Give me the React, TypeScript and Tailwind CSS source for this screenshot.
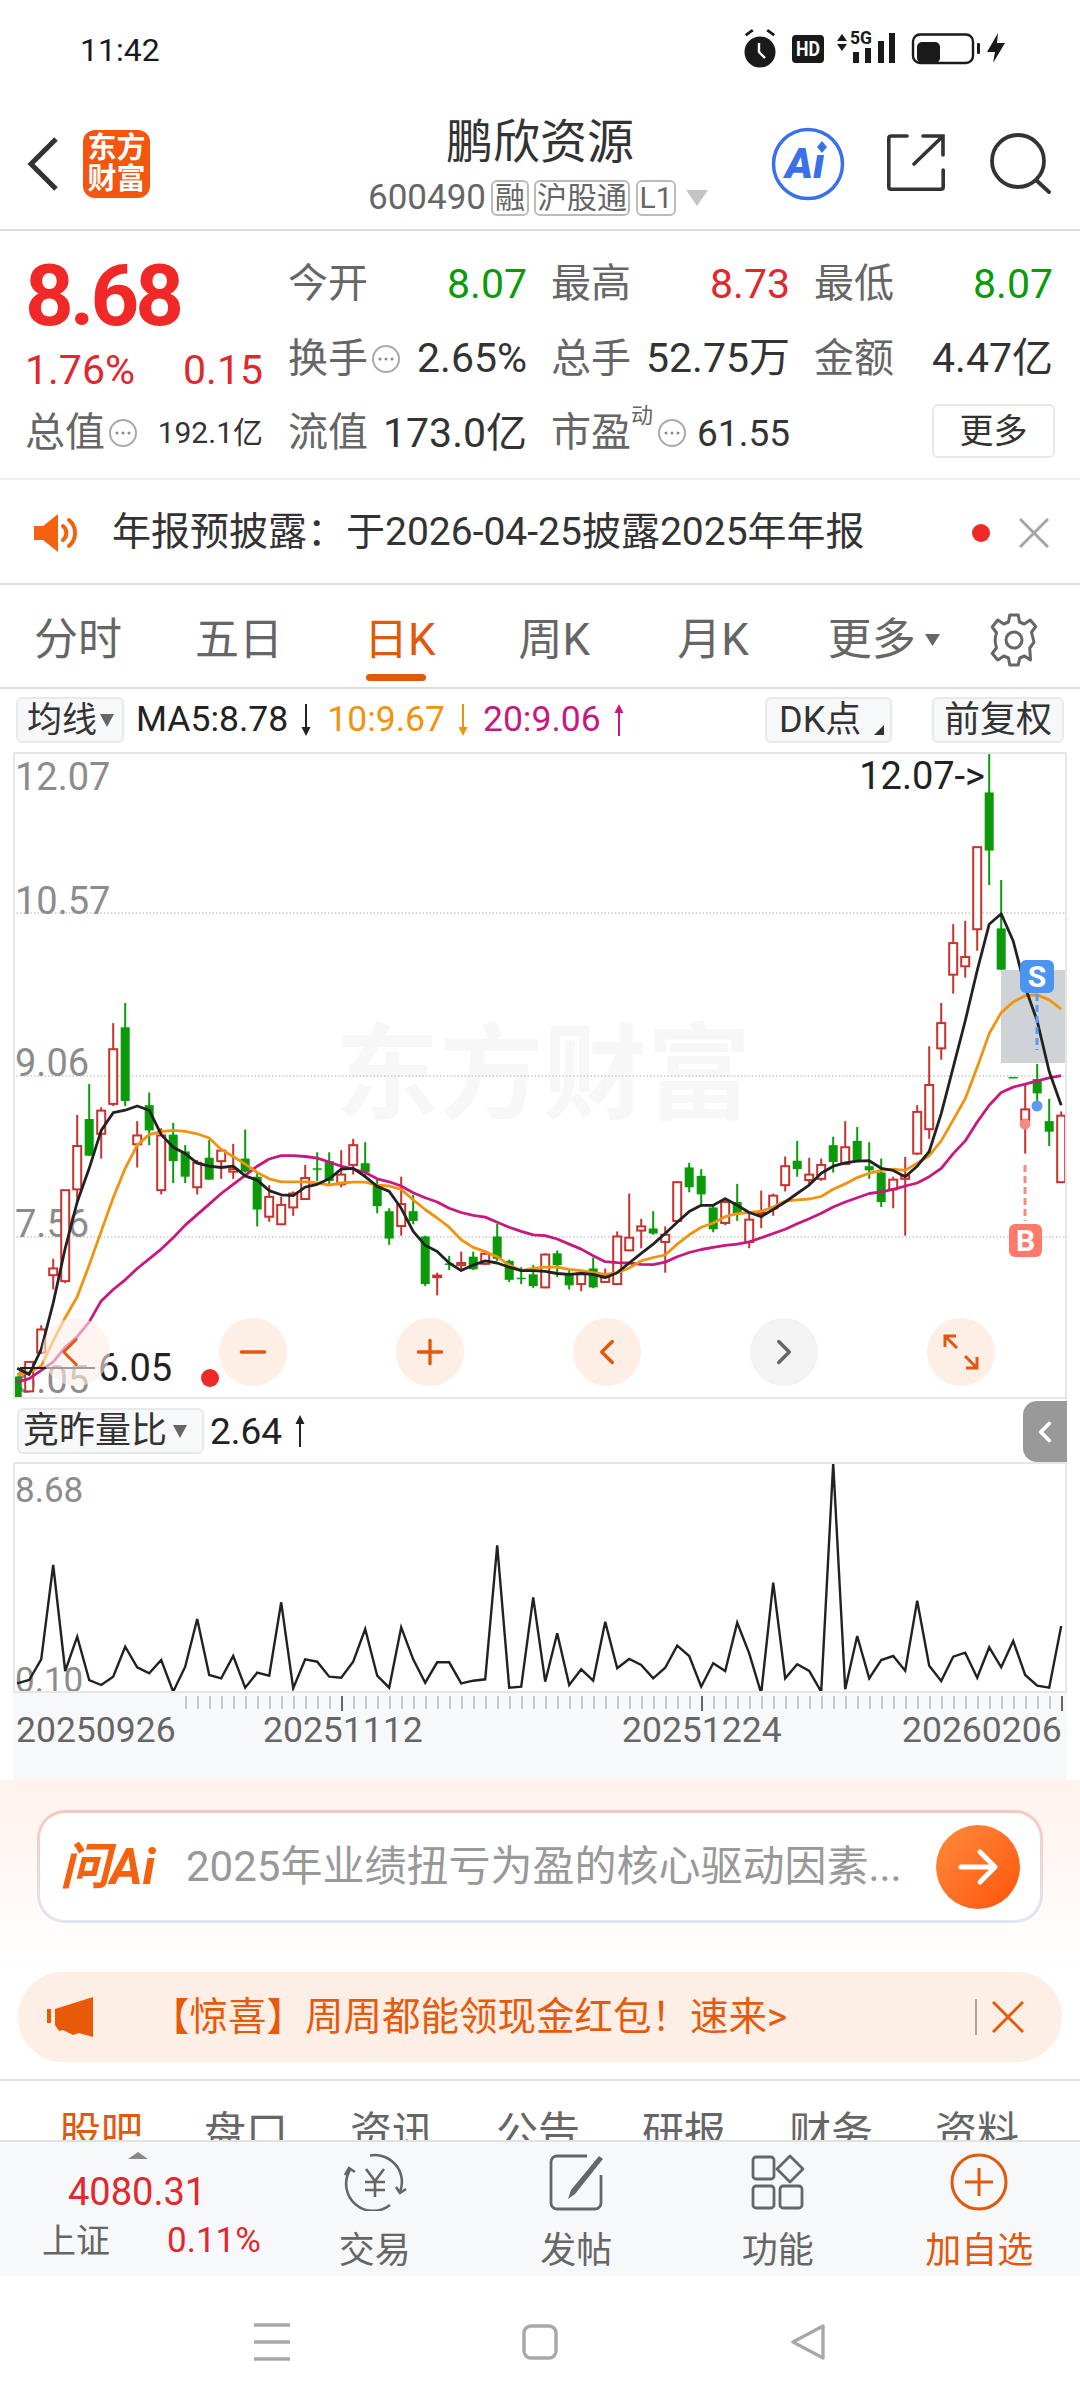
import type { ReactNode } from 'react';
import { ChevronLeft, ChevronRight, Minus, Plus } from 'lucide-react';

// candles: wick top, body top, body bottom, wick bottom, 1 = green (measured on the chart crops)
const CANDLES: number[][] = [
  [1515, 1515, 1568, 1568, 1], [1480, 1480, 1550, 1550, 0], [1393, 1403, 1458, 1460, 0], [1235, 1258, 1274, 1308, 0],
  [1072, 1072, 1288, 1293, 0], [893, 967, 1070, 1105, 0], [820, 903, 990, 990, 1], [875, 883, 938, 997, 0],
  [675, 737, 867, 872, 0], [627, 685, 860, 872, 1], [908, 942, 963, 1018, 0], [840, 870, 930, 965, 1],
  [925, 942, 1072, 1082, 0], [912, 940, 1003, 1055, 1], [965, 980, 1040, 1055, 1], [1000, 1007, 1065, 1082, 0],
  [953, 995, 1047, 1047, 1], [975, 978, 1003, 1045, 0], [962, 1022, 1028, 1045, 0], [928, 997, 1028, 1030, 1],
  [1030, 1040, 1118, 1158, 1], [1060, 1088, 1135, 1147, 0], [1087, 1107, 1153, 1155, 0], [1075, 1080, 1113, 1133, 0],
  [1012, 1043, 1093, 1095, 0], [982, 1020, 1022, 1050, 1], [982, 1003, 1050, 1060, 1], [977, 1035, 1058, 1065, 0],
  [950, 965, 1012, 1035, 0], [958, 1008, 1030, 1042, 1], [1045, 1060, 1110, 1127, 1], [1115, 1122, 1187, 1202, 1],
  [1040, 1105, 1157, 1180, 0], [1083, 1122, 1145, 1153, 1], [1180, 1182, 1295, 1300, 1], [1268, 1275, 1278, 1322, 0],
  [1228, 1246, 1248, 1262, 1], [1218, 1245, 1250, 1262, 0], [1218, 1230, 1260, 1262, 1], [1215, 1223, 1247, 1250, 0],
  [1152, 1182, 1235, 1240, 1], [1237, 1240, 1285, 1290, 1], [1255, 1280, 1282, 1295, 1], [1250, 1272, 1300, 1304, 1],
  [1222, 1225, 1303, 1305, 0], [1215, 1222, 1250, 1278, 1], [1262, 1272, 1298, 1308, 1], [1262, 1270, 1295, 1312, 0],
  [1232, 1258, 1303, 1305, 1], [1258, 1275, 1290, 1292, 0], [1170, 1182, 1295, 1297, 0], [1080, 1185, 1215, 1217, 0],
  [1140, 1158, 1168, 1210, 0], [1122, 1163, 1175, 1178, 1], [1158, 1178, 1195, 1268, 0], [1052, 1053, 1145, 1147, 0],
  [1007, 1018, 1065, 1077, 1], [1022, 1038, 1082, 1112, 1], [1105, 1113, 1165, 1172, 1], [1090, 1100, 1150, 1155, 0],
  [1057, 1100, 1127, 1145, 1], [1125, 1142, 1195, 1210, 0], [1073, 1125, 1128, 1162, 0], [1080, 1085, 1115, 1133, 0],
  [992, 1015, 1060, 1075, 0], [955, 1002, 1022, 1040, 1], [995, 1035, 1048, 1060, 0], [997, 1012, 1045, 1050, 0],
  [945, 965, 1005, 1030, 1], [908, 970, 1010, 1012, 0], [922, 955, 1003, 1005, 1], [958, 1015, 1025, 1045, 1],
  [997, 1030, 1100, 1112, 1], [1040, 1047, 1070, 1115, 0], [993, 1037, 1045, 1180, 0], [870, 886, 985, 988, 0],
  [730, 822, 927, 950, 0], [627, 675, 735, 762, 0], [440, 485, 560, 605, 0], [432, 518, 540, 567, 0],
  [257, 257, 452, 503, 0], [30, 127, 265, 347, 1], [335, 450, 548, 548, 1], [803, 803, 805, 805, 1],
  [820, 880, 905, 985, 0], [772, 808, 842, 880, 1], [855, 908, 933, 967, 1], [885, 895, 1053, 1053, 0],
];

const MA5 = [1495, 1510, 1450, 1340, 1210, 1100, 1020, 930, 888, 882, 872, 882, 940, 970, 985, 1008, 1015, 1018, 1015, 1038, 1048, 1073, 1083, 1085, 1065, 1058, 1045, 1022, 1020, 1040, 1063, 1075, 1115, 1170, 1203, 1218, 1245, 1263, 1250, 1240, 1245, 1255, 1263, 1263, 1265, 1270, 1272, 1270, 1272, 1280, 1268, 1245, 1222, 1200, 1175, 1148, 1123, 1108, 1108, 1092, 1108, 1125, 1135, 1118, 1100, 1080, 1060, 1032, 1015, 1007, 1003, 1002, 1020, 1025, 1040, 1015, 980, 890, 780, 670, 550, 440, 415, 480, 590, 670, 790, 870];
const MA10 = [1510, 1505, 1490, 1430, 1375, 1325, 1250, 1170, 1090, 1020, 965, 940, 933, 930, 932, 938, 948, 975, 992, 1010, 1030, 1045, 1052, 1052, 1052, 1055, 1060, 1055, 1053, 1053, 1060, 1062, 1070, 1095, 1118, 1138, 1160, 1190, 1208, 1218, 1230, 1250, 1263, 1258, 1255, 1255, 1260, 1263, 1268, 1272, 1268, 1257, 1240, 1232, 1226, 1200, 1178, 1160, 1150, 1135, 1128, 1125, 1122, 1112, 1098, 1095, 1093, 1087, 1070, 1057, 1042, 1032, 1025, 1022, 1025, 1008, 990, 955, 905, 855, 780, 700, 650, 625, 610, 608, 620, 642];
const MA20 = [1528, 1520, 1500, 1480, 1445, 1420, 1385, 1335, 1308, 1285, 1258, 1235, 1212, 1185, 1155, 1130, 1105, 1080, 1058, 1037, 1015, 998, 990, 990, 992, 996, 1005, 1015, 1022, 1030, 1045, 1052, 1062, 1078, 1090, 1100, 1115, 1125, 1132, 1136, 1148, 1160, 1170, 1178, 1180, 1188, 1200, 1212, 1228, 1242, 1244, 1245, 1248, 1249, 1243, 1230, 1220, 1213, 1208, 1203, 1200, 1195, 1185, 1175, 1165, 1152, 1140, 1127, 1112, 1100, 1090, 1080, 1076, 1070, 1062, 1055, 1040, 1020, 985, 955, 910, 870, 840, 827, 820, 812, 805, 800];
const RATIO = [880, 870, 808, 525, 843, 740, 870, 885, 860, 770, 832, 850, 810, 905, 830, 687, 855, 865, 798, 893, 848, 857, 637, 895, 808, 815, 860, 863, 815, 717, 857, 893, 712, 808, 878, 817, 817, 880, 872, 868, 466, 893, 890, 622, 875, 730, 885, 838, 872, 695, 835, 807, 825, 865, 833, 767, 798, 890, 820, 843, 698, 790, 910, 578, 865, 823, 843, 905, 220, 898, 738, 865, 810, 798, 842, 632, 827, 873, 800, 788, 863, 772, 832, 753, 855, 887, 893, 708];

const candleX = (i: number) => 17.2 + 12 * i;
const priceY = (z: number) => 740 + z / 2.376;
const linePoints = (vals: number[]) => vals.map((v, i) => `${candleX(i).toFixed(1)},${priceY(v).toFixed(1)}`).join(' ');

function PriceChart() {
    return (
        <svg className="absolute inset-0 w-full h-full" viewBox="15 755 1050 643">
            {[914, 1077, 1238].map((y) => (
                <line key={y} x1="13" x2="1067" y1={y} y2={y} stroke="#c9c9c9" strokeWidth="1.5" strokeDasharray="1.5 2" />
            ))}
            <g fill="#8c8c8c" fontSize="38">
                <text x="15" y="791">12.07</text>
                <text x="15" y="915">10.57</text>
                <text x="15" y="1077">9.06</text>
                <text x="15" y="1238">7.56</text>
                <text x="15" y="1394">6.05</text>
            </g>
            <rect x="1001" y="971" width="66" height="93" fill="#cfd3d8" />
            {CANDLES.map(([wt, bt, bb, wb, green], i) => {
                const x = candleX(i);
                const color = green ? '#0a9a0a' : '#c8322e';
                return (
                    <g key={i}>
                        <line x1={x} x2={x} y1={priceY(wt)} y2={priceY(wb)} stroke={color} strokeWidth="2" />
                        {green ? (
                            <rect x={x - 4.5} y={priceY(bt)} width="9" height={Math.max(priceY(bb) - priceY(bt), 1.5)} fill={color} />
                        ) : (
                            <rect x={x - 4} y={priceY(bt)} width="8" height={Math.max(priceY(bb) - priceY(bt), 1.5)} fill="#fff" stroke={color} strokeWidth="2" />
                        )}
                    </g>
                );
            })}
            <polyline points={linePoints(MA20)} fill="none" stroke="#c8187e" strokeWidth="2.8" strokeLinejoin="round" />
            <polyline points={linePoints(MA10)} fill="none" stroke="#f0930f" strokeWidth="2.8" strokeLinejoin="round" />
            <polyline points={linePoints(MA5)} fill="none" stroke="#222" strokeWidth="2.8" strokeLinejoin="round" />
            <line x1="1037" x2="1037" y1="995" y2="1051" stroke="#5b9bf0" strokeWidth="3" strokeDasharray="7 4" />
            <line x1="1025" x2="1025" y1="1166" y2="1222" stroke="#f58a80" strokeWidth="3" strokeDasharray="7 4" />
            <ellipse cx="1037" cy="1107" rx="5.5" ry="5.5" fill="#5b9bf0" />
            <ellipse cx="1025" cy="1125" rx="5.5" ry="5.5" fill="#f58a80" />
            <rect x="1020" y="961" width="34" height="33" rx="6" fill="#4b95f0" />
            <text x="1037" y="988" fontSize="30" fontWeight="700" fill="#fff" textAnchor="middle">S</text>
            <rect x="1009" y="1225" width="33" height="33" rx="6" fill="#ff7a6a" />
            <text x="1025.5" y="1252" fontSize="30" fontWeight="700" fill="#fff" textAnchor="middle">B</text>
            <text x="985" y="790" fontSize="38" fill="#222" textAnchor="end">12.07-&gt;</text>
            <line x1="20" x2="95" y1="1369" y2="1369" stroke="#222" strokeWidth="2" />
            <text x="98" y="1382" fontSize="38" fill="#222">6.05</text>
            <circle cx="210" cy="1379" r="9" fill="#f02828" />
        </svg>
    );
}

function RatioChart() {
    const points = RATIO.map((v, i) => `${candleX(i).toFixed(1)},${(1390 + v / 3).toFixed(1)}`).join(' ');
    return (
        <svg className="absolute inset-0 w-full h-full" viewBox="15 1464 1050 227">
            <g fill="#8c8c8c" fontSize="35">
                <text x="15" y="1502">8.68</text>
                <text x="15" y="1692">0.10</text>
            </g>
            <polyline points={points} fill="none" stroke="#222" strokeWidth="2.4" strokeLinejoin="miter" />
        </svg>
    );
}

function AxisTicks() {
    const ticks = Array.from({ length: 74 }, (_, i) => 186 + i * 12);
    return (
        <svg className="block w-[1054px] h-[20px]" viewBox="13 1693 1054 20">
            {ticks.map((x) => {
                const major = x === 342 || x === 702 || x === 1062;
                return (
                    <line key={x} x1={x} x2={x} y1="1696" y2={major ? 1711 : 1709} stroke={major ? '#666' : '#aaa'} strokeWidth={major ? 2 : 1.2} />
                );
            })}
        </svg>
    );
}

function DotsIcon({ className }: { className?: string }) {
    return (
        <svg className={className} viewBox="0 0 30 30" fill="none">
            <circle cx="15" cy="15" r="13" stroke="#aaa" strokeWidth="2" />
            <circle cx="9" cy="15" r="1.5" fill="#888" />
            <circle cx="15" cy="15" r="1.5" fill="#888" />
            <circle cx="21" cy="15" r="1.5" fill="#888" />
        </svg>
    );
}

// thin trend arrow next to the MA values
function TrendArrow({ up, className }: { up?: boolean; className?: string }) {
    return (
        <svg className={`w-[12px] h-[32px] ${className}`} viewBox="0 0 12 32" fill="currentColor">
            {up ? <path d="M6 0l4.500 9H7v23H5V9H1.500z" /> : <path d="M6 32l4.500-9H7V0H5v23H1.500z" />}
        </svg>
    );
}

function StatusIcons() {
    return (
        <svg className="w-[290px] h-[60px]" viewBox="0 0 290 60">
            <g fill="#1a1a1a">
                <circle cx="30" cy="32" r="15.5" />
                <path d="M15 14l7-5 1.6 2.2-7 5zM45 14l-7-5-1.6 2.2 7 5z" />
                <rect x="62" y="15" width="32" height="28" rx="4" />
                <path d="M107 21l5-7 5 7zM107 24h10l-5 7z" />
                <rect x="123" y="32" width="6" height="11" />
                <rect x="135" y="28" width="6" height="15" />
                <rect x="148" y="21" width="6" height="22" />
                <rect x="159" y="13" width="6" height="30" />
                <rect x="187" y="22" width="23" height="21" rx="5" />
                <rect x="247" y="23" width="3" height="11" rx="1" />
                <path d="M268 13l-11 19h8l-2 11 12-20h-8z" />
            </g>
            <path d="M29 23v9l6 6" stroke="#fff" strokeWidth="2.4" fill="none" />
            <rect x="183" y="14.5" width="60" height="28.5" rx="7" fill="none" stroke="#1a1a1a" strokeWidth="2.4" />
            <text x="78" y="36" fontSize="20" fontWeight="700" fill="#fff" textAnchor="middle" textLength="24" lengthAdjust="spacingAndGlyphs">HD</text>
            <text x="131" y="24" fontSize="18" fontWeight="700" fill="#1a1a1a" textAnchor="middle" textLength="22" lengthAdjust="spacingAndGlyphs">5G</text>
        </svg>
    );
}

function Quote({ label, value, color = 'text-[#333]', extra }: { label: string; value: string; color?: string; extra?: ReactNode }) {
    return (
        <div className="w-[239px] flex items-center justify-between">
            <span className="text-[40px] leading-none text-[#666] flex items-center">{label}{extra}</span>
            <span className={`text-[41px] leading-none ${color}`}>{value}</span>
        </div>
    );
}

function BarItem({ label, active, children }: { label: string; active?: boolean; children: ReactNode }) {
    return (
        <div className="flex-1 flex flex-col items-center pt-[11px]">
            <div className="h-[58px] flex items-center justify-center">{children}</div>
            <span className={`mt-[20px] text-[36px] leading-[40px] ${active ? 'text-[#e0590f]' : 'text-[#666]'}`}>{label}</span>
        </div>
    );
}

export default function App() {
    return (
        <div className="w-[1080px] h-[2408px] overflow-hidden bg-white font-[Roboto,'Noto_Sans_CJK_SC',sans-serif]">
            {/* Status bar */}
            <div className="h-[100px] flex justify-between pl-[80px] pr-[60px] pt-[20px]">
                <span className="text-[32px] leading-[60px] text-[#1a1a1a]">11:42</span>
                <StatusIcons />
            </div>

            {/* Header */}
            <div className="h-[131px] flex border-b-2 border-[#dddddd]">
                <div className="w-[320px] flex pl-[27px] pt-[30px]">
                    <svg className="w-[32px] h-[56px] mt-[6px]" viewBox="0 0 32 56" fill="none">
                        <path d="M29 3L4 28l25 25" stroke="#333" strokeWidth="5" />
                    </svg>
                    <div className="ml-[24px] w-[67px] h-[68px] rounded-[12px] bg-[#f4550f] flex flex-col items-center justify-center text-white text-[29px] leading-[31px] font-bold">
                        <span>东方</span>
                        <span>财富</span>
                    </div>
                </div>
                <div className="w-[440px] flex flex-col items-center">
                    <div className="mt-[17px] text-[47px] leading-[50px] text-[#333]">鹏欣资源</div>
                    <div className="mt-[11px] -ml-[4px] flex items-center text-[#666]">
                        <span className="text-[35px] leading-[40px]">600490</span>
                        <span className="ml-[5px] w-[38px] h-[36px] border-2 border-[#bbbbbb] rounded-[6px] text-[30px] leading-[32px] text-center">融</span>
                        <span className="ml-[5px] w-[96px] h-[36px] border-2 border-[#bbbbbb] rounded-[6px] text-[30px] leading-[32px] text-center">沪股通</span>
                        <span className="ml-[6px] w-[40px] h-[36px] border-2 border-[#bbbbbb] rounded-[6px] text-[30px] leading-[32px] text-center">L1</span>
                        <svg className="ml-[10px] w-[22px] h-[16px]" viewBox="0 0 22 16"><path d="M0 0h22L11 16z" fill="#c4c4c4" /></svg>
                    </div>
                </div>
                <div className="flex-1 relative flex items-start pt-[27px] pl-[11px]">
                    <svg className="w-[74px] h-[74px]" viewBox="0 0 74 74" fill="none">
                        <circle cx="37" cy="37" r="34.5" stroke="#3a70e8" strokeWidth="3.5" />
                        <text x="34" y="51" fontSize="42" fontWeight="900" fontStyle="italic" fill="#3a70e8" textAnchor="middle">{'A\u0131'}</text>
                        <path d="M51 14l5 6-5 6-5-6z" fill="#3a70e8" />
                    </svg>
                    <svg className="ml-[42px] mt-[7px] w-[58px] h-[57px]" viewBox="0 0 58 57" fill="none" stroke="#333" strokeWidth="3.6" strokeLinecap="round">
                        <path d="M20 2H4a2.2 2.2 0 0 0-2.2 2.2V53a2.2 2.2 0 0 0 2.2 2.2H54a2.2 2.2 0 0 0 2.2-2.2V36" />
                        <path d="M27 30L55 3M36 2h20v19" />
                    </svg>
                    <svg className="ml-[44px] mt-[5px] w-[62px] h-[62px]" viewBox="0 0 62 62" fill="none" stroke="#333" strokeWidth="3.8" strokeLinecap="round">
                        <circle cx="29" cy="29" r="26" />
                        <path d="M47 48l13 12" />
                    </svg>
                </div>
            </div>

            {/* Quote */}
            <div className="h-[249px] flex border-b-2 border-[#eeeeee] pt-[16px]">
                <div className="w-[288px] pl-[25px] flex flex-col">
                    <div className="h-[98px] flex items-center text-[85px] leading-none font-bold text-[#f02828] tracking-[-4px]">8.68</div>
                    <div className="h-[51px] flex items-center justify-between pr-[25px] text-[41px] leading-none text-[#e0282e]">
                        <span>1.76%</span>
                        <span>0.15</span>
                    </div>
                    <div className="h-[74px] flex items-center justify-between pr-[25px]">
                        <span className="text-[40px] leading-none text-[#666] flex items-center">总值<DotsIcon className="ml-[3px] w-[30px] h-[30px]" /></span>
                        <span className="text-[30px] leading-none text-[#333]">192.1亿</span>
                    </div>
                </div>
                <div className="flex-1 flex flex-col">
                    <div className="h-[74px] flex items-center gap-[24px]">
                        <Quote label="今开" value="8.07" color="text-[#0a9a0a]" />
                        <Quote label="最高" value="8.73" color="text-[#e0282e]" />
                        <Quote label="最低" value="8.07" color="text-[#0a9a0a]" />
                    </div>
                    <div className="h-[75px] flex items-center gap-[24px]">
                        <Quote label="换手" value="2.65%" extra={<DotsIcon className="ml-[3px] w-[30px] h-[30px]" />} />
                        <Quote label="总手" value="52.75万" />
                        <Quote label="金额" value="4.47亿" />
                    </div>
                    <div className="h-[74px] flex items-center gap-[24px]">
                        <Quote label="流值" value="173.0亿" />
                        <div className="w-[239px] flex items-center justify-between">
                            <span className="text-[40px] leading-none text-[#666] flex items-center">
                                市盈
                                <span className="text-[22px] leading-none -mt-[34px] w-[26px]">动</span>
                                <DotsIcon className="w-[30px] h-[30px]" />
                            </span>
                            <span className="text-[37px] leading-none text-[#333]">61.55</span>
                        </div>
                        <div className="ml-[118px] w-[123px] h-[54px] -mt-[5px] border-2 border-[#e8e8e8] rounded-[6px] flex items-center justify-center text-[34px] leading-none text-[#333]">更多</div>
                    </div>
                </div>
            </div>

            {/* Notice */}
            <div className="h-[105px] flex items-center border-b-2 border-[#dddddd] pl-[34px] pt-[2px]">
                <svg className="w-[46px] h-[38px]" viewBox="0 0 46 38" fill="none">
                    <path d="M0 12h9L24 0v38L9 26H0z" fill="#f4620f" />
                    <path d="M29 12a9 9 0 0 1 0 14M35 6a17 17 0 0 1 0 26" stroke="#f4620f" strokeWidth="4" strokeLinecap="round" />
                </svg>
                <span className="ml-[32px] text-[39px] leading-none text-[#333] whitespace-nowrap">{'年报预披露\uFF1A于2026-04-25披露2025年年报'}</span>
                <span className="ml-auto w-[18px] h-[18px] rounded-full bg-[#f02828]" />
                <svg className="ml-[29px] mr-[31px] w-[30px] h-[30px]" viewBox="0 0 30 30" fill="none" stroke="#a6a6a6" strokeWidth="3">
                    <path d="M1 1l28 28M29 1L1 29" />
                </svg>
            </div>

            {/* Period tabs */}
            <div className="h-[104px] flex items-center border-b-2 border-[#dddddd] pt-[8px] pl-[34px] text-[44px] leading-none text-[#666]">
                <span>分时</span>
                <span className="ml-[73px]">五日</span>
                <span className="relative ml-[81px] text-[#e0590f]">
                    日K
                    <span className="absolute left-[2px] -bottom-[19px] w-[60px] h-[7px] rounded-full bg-[#e0590f]" />
                </span>
                <span className="ml-[83px]">周K</span>
                <span className="ml-[87px]">月K</span>
                <span className="ml-[79px]">更多</span>
                <svg className="ml-[9px] w-[15px] h-[12px]" viewBox="0 0 15 12"><path d="M0 0h15L7.5 12z" fill="#666" /></svg>
                <svg className="ml-[44px] w-[60px] h-[60px]" viewBox="0 0 24 24" fill="none" stroke="#666" strokeWidth="1.2" strokeLinejoin="round">
                    <path d="M10.3 2h3.4l.5 2.8 1.9.8 2.4-1.6 2.2 2.6-1.7 2.3.5 2 .5 2-1.7 2.3L18.600 20l-2.400-1.600-1.900.8L13.700 22h-3.400l-.5-2.800-1.900-.8L5.500 20l-2.200-2.600L5 15.100l-.5-2 0-2 .5-2-1.700-2.300L5.500 4l2.400 1.600 1.900-.8z" />
                    <circle cx="12" cy="12" r="3.200" />
                </svg>
            </div>

            {/* MA legend */}
            <div className="h-[63px] flex items-start pt-[8px] pl-[16px]">
                <div className="w-[108px] h-[46px] flex items-center pl-[9px] rounded-[6px] border-2 border-[#e8e9ec] bg-[#f7f8fa] text-[35px] leading-none text-[#333]">
                    均线
                    <svg className="ml-[3px] w-[14px] h-[14px]" viewBox="0 0 14 14"><path d="M0 1h14L7 14z" fill="#666" /></svg>
                </div>
                <div className="h-[46px] ml-[12px] flex items-center text-[35.5px] leading-none">
                    <span className="text-[#222]">MA5:8.78</span>
                    <TrendArrow className="ml-[12px] text-[#222]" />
                    <span className="ml-[15px] text-[#f0930f]">10:9.67</span>
                    <TrendArrow className="ml-[12px] text-[#f0930f]" />
                    <span className="ml-[14px] text-[#c8187e]">20:9.06</span>
                    <TrendArrow up className="ml-[12px] text-[#c8187e]" />
                </div>
                <div className="ml-auto flex">
                    <div className="w-[127px] h-[46px] flex items-center pl-[12px] rounded-[6px] border-2 border-[#e8e9ec] bg-[#f7f8fa] text-[36px] leading-none text-[#333] relative">
                        DK点
                        <span className="absolute right-[6px] bottom-[6px] w-0 h-0 border-l-[10px] border-l-transparent border-b-[10px] border-b-[#333]" />
                    </div>
                    <div className="ml-[40px] mr-[16px] w-[132px] h-[46px] flex items-center justify-center rounded-[6px] border-2 border-[#e8e9ec] bg-[#f7f8fa] text-[36px] leading-none text-[#333]">前复权</div>
                </div>
            </div>

            {/* Price chart */}
            <div className="relative mx-[13px] h-[647px] border-2 border-[#e6e6e6] overflow-hidden">
                <span className="absolute left-[320px] top-[270px] text-[104px] leading-none font-bold text-[#f7f7f7] whitespace-nowrap">东方财富</span>
                <PriceChart />
                <div className="absolute left-[27px] top-[564px] flex gap-[109px]">
                    <div className="w-[68px] h-[68px] rounded-full bg-[#fdeee6]/60 flex items-center justify-center">
                        <ChevronLeft className="w-[50px] h-[50px] -ml-[12px] text-[#e0590f]" strokeWidth={1.4} />
                    </div>
                    <div className="w-[68px] h-[68px] rounded-full bg-[#fdeee6] flex items-center justify-center">
                        <Minus className="w-[40px] h-[40px] text-[#e0590f]" strokeWidth={2} />
                    </div>
                    <div className="w-[68px] h-[68px] rounded-full bg-[#fdeee6] flex items-center justify-center">
                        <Plus className="w-[40px] h-[40px] text-[#e0590f]" strokeWidth={2} />
                    </div>
                    <div className="w-[68px] h-[68px] rounded-full bg-[#fdeee6] flex items-center justify-center">
                        <ChevronLeft className="w-[42px] h-[42px] text-[#e0590f]" strokeWidth={2} />
                    </div>
                    <div className="w-[68px] h-[68px] rounded-full bg-[#f3f3f3] flex items-center justify-center">
                        <ChevronRight className="w-[42px] h-[42px] text-[#666]" strokeWidth={2} />
                    </div>
                    <div className="w-[68px] h-[68px] rounded-full bg-[#fdeee6] flex items-center justify-center">
                        <svg className="w-[36px] h-[36px]" viewBox="0 0 36 36" fill="none" stroke="#e0590f" strokeWidth="3">
                            <path d="M2 13V2h11M2 2l12 12M34 23v11H23M34 34L22 22" />
                        </svg>
                    </div>
                </div>
            </div>

            {/* Sub indicator legend */}
            <div className="h-[63px] flex items-start pt-[9px] pl-[17px] relative">
                <div className="w-[187px] h-[46px] flex items-center pl-[4px] rounded-[6px] border-2 border-[#e8e9ec] bg-[#f7f8fa] text-[36px] leading-none text-[#333]">
                    竞昨量比
                    <svg className="ml-[6px] w-[14px] h-[14px]" viewBox="0 0 14 14"><path d="M0 1h14L7 14z" fill="#666" /></svg>
                </div>
                <span className="ml-[6px] h-[46px] flex items-center text-[37px] leading-none text-[#222]">2.64</span>
                <div className="h-[46px] flex items-center"><TrendArrow up className="ml-[12px] text-[#222]" /></div>
                <div className="absolute right-[13px] top-[2px] w-[44px] h-[61px] bg-[#999999] rounded-l-[14px] flex items-center justify-center">
                    <ChevronLeft className="w-[34px] h-[40px] text-white" strokeWidth={2.6} />
                </div>
            </div>

            {/* Ratio chart */}
            <div className="relative mx-[13px] h-[231px] border-2 border-[#e6e6e6] overflow-hidden">
                <RatioChart />
            </div>

            {/* Date axis */}
            <div className="mx-[13px] h-[87px] bg-[#f7f8fa]">
                <AxisTicks />
                <div className="flex text-[35.5px] leading-none text-[#666]">
                    <span className="ml-[3px] w-[160px] shrink-0">20250926</span>
                    <span className="ml-[87px] w-[160px] shrink-0">20251112</span>
                    <span className="ml-[199px] w-[160px] shrink-0">20251224</span>
                    <span className="ml-[120px] w-[160px] shrink-0">20260206</span>
                </div>
            </div>

            {/* Ask AI */}
            <div className="h-[192px] pt-[30px] px-[37px] bg-linear-to-b from-[#fff2ec] to-white">
                <div className="h-[113px] p-[3px] rounded-[28px] bg-linear-to-b from-[#f6c8bd] to-[#dfe6f3]">
                    <div className="h-full rounded-[25px] bg-white flex items-center pl-[20px] pr-[20px]">
                        <span className="w-[98px] text-[50px] leading-none font-bold italic text-[#f4620f] whitespace-nowrap">问Ai</span>
                        <span className="ml-[28px] text-[42px] leading-none text-[#999999] whitespace-nowrap">2025年业绩扭亏为盈的核心驱动因素...</span>
                        <div className="ml-auto w-[84px] h-[84px] rounded-full bg-linear-to-br from-[#ff8a3a] to-[#ff5200] flex items-center justify-center">
                            <svg className="w-[42px] h-[42px]" viewBox="0 0 42 42" fill="none" stroke="#fff" strokeWidth="5" strokeLinecap="round" strokeLinejoin="round">
                                <path d="M4 21h32M23 6l15 15-15 15" />
                            </svg>
                        </div>
                    </div>
                </div>
            </div>

            {/* Promo banner */}
            <div className="mx-[18px] h-[90px] rounded-full bg-[#fdeee6] flex items-center pl-[29px]">
                <svg className="w-[46px] h-[40px]" viewBox="0 0 46 40" fill="#e95a08">
                    <rect x="0" y="12" width="4" height="14" />
                    <path d="M8 12L46 0v40l-14-4-6 2-10-5-4 1-4-6z" />
                </svg>
                <span className="ml-[58px] text-[38.5px] leading-none text-[#e65a0c] whitespace-nowrap">{'【惊喜】周周都能领现金红包\uFF01速来>'}</span>
                <span className="ml-auto w-[2px] h-[36px] bg-[#b9a59b]" />
                <svg className="ml-[15px] mr-[38px] w-[32px] h-[32px]" viewBox="0 0 32 32" fill="none" stroke="#e65a0c" strokeWidth="3">
                    <path d="M1 1l30 30M31 1L1 31" />
                </svg>
            </div>

            {/* Content tabs, cut off by the bottom bar */}
            <div className="mt-[17px] h-[61px] overflow-hidden border-t-2 border-[#e4e4e4] pt-[31px] pl-[59px] flex text-[42px] leading-none text-[#666]">
                <span className="text-[#e0590f]">股吧</span>
                <span className="ml-[61px]">盘口</span>
                <span className="ml-[62px]">资讯</span>
                <span className="ml-[62px]">公告</span>
                <span className="ml-[62px]">研报</span>
                <span className="ml-[63px]">财务</span>
                <span className="ml-[62px]">资料</span>
            </div>

            {/* Bottom bar */}
            <div className="h-[136px] flex bg-[#f7f8fa] border-t-2 border-[#e0e2e6]">
                <div className="w-[274px] flex flex-col">
                    <svg className="ml-[128px] mt-[10px] w-[20px] h-[7px]" viewBox="0 0 20 7"><path d="M10 0l10 7H0z" fill="#888" /></svg>
                    <span className="mt-[10px] ml-[68px] text-[38px] leading-[46px] text-[#e0282e]">4080.31</span>
                    <div className="mt-[6px] pl-[42px] flex items-center">
                        <span className="text-[34px] leading-[40px] text-[#666]">上证</span>
                        <span className="ml-[57px] text-[35px] leading-[40px] text-[#e0282e]">0.11%</span>
                    </div>
                </div>
                <BarItem label="交易">
                    <svg className="w-[66px] h-[58px]" viewBox="0 0 66 58" fill="none" stroke="#666" strokeWidth="2.600">
                        <path d="M28 2.500A27 27 0 0 1 58 39M8 17A27 27 0 0 0 48 52" />
                        <path d="M54 34l4 6 6-4M3 22l4-7 6 4" />
                        <path d="M24 16l9 12 9-12M33 28v16M23 29h20M23 37h20" />
                    </svg>
                </BarItem>
                <BarItem label="发帖">
                    <svg className="w-[54px] h-[58px]" viewBox="0 0 54 58" fill="none" stroke="#666" strokeWidth="2.800">
                        <path d="M38 3H8a6 6 0 0 0-6 6v41a6 6 0 0 0 6 6h38a6 6 0 0 0 6-6V22" />
                        <path d="M50 3L22 37l-3 9 7-5L54 6z" fill="#666" stroke="none" />
                    </svg>
                </BarItem>
                <BarItem label="功能">
                    <svg className="w-[54px] h-[56px]" viewBox="0 0 54 56" fill="none" stroke="#666" strokeWidth="2.800">
                        <rect x="2" y="3" width="21" height="22" rx="3" />
                        <path d="M39 2l13 13-13 13-13-13z" strokeLinejoin="round" />
                        <rect x="2" y="32" width="21" height="22" rx="3" />
                        <rect x="29" y="32" width="22" height="22" rx="3" />
                    </svg>
                </BarItem>
                <BarItem label="加自选" active>
                    <svg className="w-[58px] h-[58px]" viewBox="0 0 58 58" fill="none" stroke="#e0590f" strokeWidth="3">
                        <circle cx="29" cy="29" r="27" />
                        <path d="M15 29h28M29 15v28" />
                    </svg>
                </BarItem>
            </div>

            {/* Navigation bar */}
            <div className="h-[132px] flex items-center justify-center gap-[232px]">
                <svg className="w-[36px] h-[38px]" viewBox="0 0 36 38" fill="none" stroke="#a8a8a8" strokeWidth="3.400">
                    <path d="M0 2h36M0 19h36M0 36h36" />
                </svg>
                <svg className="w-[36px] h-[36px]" viewBox="0 0 36 36" fill="none" stroke="#a8a8a8" strokeWidth="3.400">
                    <rect x="2" y="2" width="32" height="32" rx="7" />
                </svg>
                <svg className="w-[36px] h-[36px]" viewBox="0 0 36 36" fill="none" stroke="#a8a8a8" strokeWidth="3.400" strokeLinejoin="round">
                    <path d="M33 2v32L3 18z" />
                </svg>
            </div>
        </div>
    );
}
